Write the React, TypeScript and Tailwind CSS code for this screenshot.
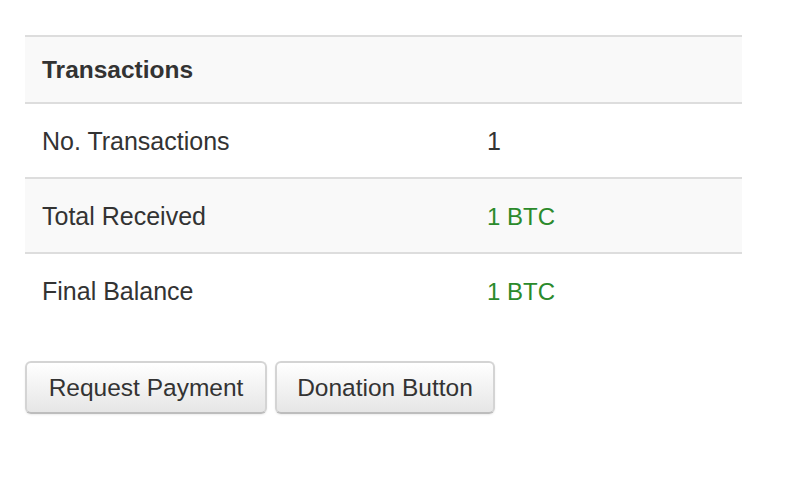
import React from "react";

const rows = [
  { label: "No. Transactions", value: "1", green: false, striped: false },
  { label: "Total Received", value: "1 BTC", green: true, striped: true },
  { label: "Final Balance", value: "1 BTC", green: true, striped: false },
];

export default function App() {
  return (
    <div
      className="w-[785px] h-[500px] bg-white pt-[35px] pl-[25px] text-[#333333]"
      style={{ fontFamily: '"Liberation Sans", Arial, sans-serif' }}
    >
      <div className="w-[717px]">
        <div className="border-t-2 border-[#dddddd] bg-[#f9f9f9] h-[67px] flex items-center pl-[17px] pt-[2px] text-[24.5px] font-bold leading-none">
          Transactions
        </div>
        {rows.map((r) => (
          <div
            key={r.label}
            className={`border-t-2 border-[#dddddd] h-[75px] flex items-center pt-[2px] text-[25px] leading-none ${
              r.striped ? "bg-[#f9f9f9]" : "bg-white"
            }`}
          >
            <div className="w-[462px] pl-[17px]">{r.label}</div>
            <div className={r.green ? "text-[#2b8a2b] text-[24px]" : ""}>{r.value}</div>
          </div>
        ))}
      </div>
      <div className="flex gap-[8px] mt-[34px]">
        <button className="w-[242px] h-[53px] pt-[2px] rounded-[6px] border-2 border-[#d4d4d4] border-b-[#bdbdbd] bg-gradient-to-b from-white to-[#e6e6e6] text-[24.5px] text-[#333333] shadow-[0_1px_2px_rgba(0,0,0,0.08)]">
          Request Payment
        </button>
        <button className="w-[220px] h-[53px] pt-[2px] rounded-[6px] border-2 border-[#d4d4d4] border-b-[#bdbdbd] bg-gradient-to-b from-white to-[#e6e6e6] text-[24.5px] text-[#333333] shadow-[0_1px_2px_rgba(0,0,0,0.08)]">
          Donation Button
        </button>
      </div>
    </div>
  );
}
